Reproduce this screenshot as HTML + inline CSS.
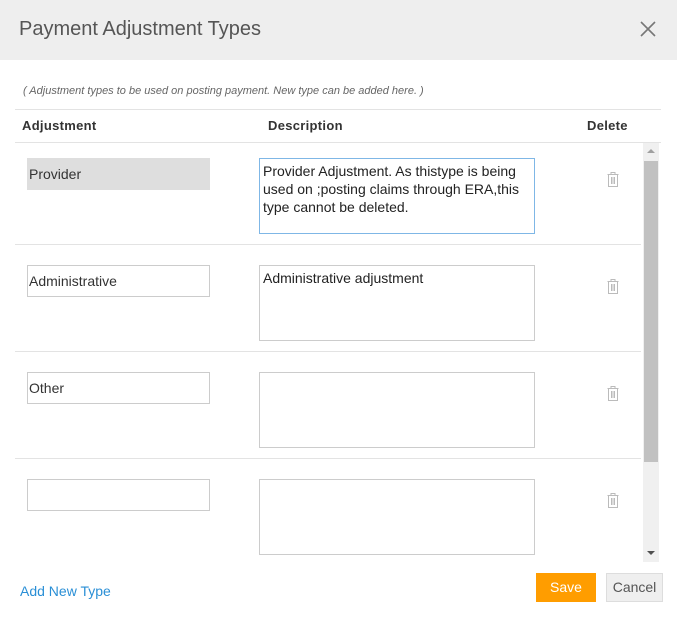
<!DOCTYPE html><html><head><style>
body{margin:0;width:677px;height:639px;background:#fff;font-family:"Liberation Sans",sans-serif;position:relative;overflow:hidden}
.a{position:absolute}
.hd{left:0;top:0;width:677px;height:60px;background:#eeeeee}
.inp{position:absolute;left:27px;width:180px;height:30px;border:1px solid #ccc;background:#fff;font-size:14px;color:#333;line-height:30px;padding-left:1px;box-sizing:content-box}
.ta{position:absolute;left:259px;width:276px;height:76px;border:1px solid #ccc;background:#fff;font-size:14px;color:#222;line-height:18px;padding:3px;box-sizing:border-box}
.ln{position:absolute;left:15px;width:626px;height:1px;background:#e3e3e3}
.tr{position:absolute;left:607px}
</style></head><body>
<div class="a hd"></div>
<div class="a" style="left:19px;top:18px;font-size:20px;color:#555">Payment Adjustment Types</div>
<svg class="a" style="left:640px;top:21px" width="16" height="16"><path d="M1 1L15 15M15 1L1 15" stroke="#777" stroke-width="1.6"/></svg>
<div class="a" style="left:23px;top:85px;font-size:11px;font-style:italic;color:#666">( Adjustment types to be used on posting payment. New type can be added here. )</div>
<div class="a" style="left:15px;top:109px;width:646px;height:1px;background:#e3e3e3"></div>
<div class="a" style="left:22px;top:118px;font-size:13px;font-weight:bold;color:#333;letter-spacing:0.3px">Adjustment</div>
<div class="a" style="left:268px;top:118px;font-size:13px;font-weight:bold;color:#333;letter-spacing:0.3px">Description</div>
<div class="a" style="left:587px;top:118px;font-size:13px;font-weight:bold;color:#333;letter-spacing:0.3px">Delete</div>
<div class="a" style="left:15px;top:142px;width:646px;height:1px;background:#e3e3e3"></div>
<div class="a" style="left:643px;top:143px;width:16px;height:419px;background:#f0f0f0"></div>
<div class="a" style="left:644px;top:161px;width:14px;height:301px;background:#c1c1c1"></div>
<svg class="a" style="left:646px;top:147px" width="10" height="8"><path d="M1 6L5 2L9 6Z" fill="#a0a0a0"/></svg>
<svg class="a" style="left:646px;top:549px" width="10" height="8"><path d="M1 2L5 6L9 2Z" fill="#505050"/></svg>

<div class="inp" style="top:158px;background:#dedede;border-color:#dedede">Provider</div>
<div class="ta" style="top:158px;border-color:#7fb7e6">Provider Adjustment. As thistype is being used on ;posting claims through ERA,this type cannot be deleted.</div>
<div class="ln" style="top:244px"></div>
<div class="inp" style="top:265px">Administrative</div>
<div class="ta" style="top:265px">Administrative adjustment</div>
<div class="ln" style="top:351px"></div>
<div class="inp" style="top:372px">Other</div>
<div class="ta" style="top:372px"></div>
<div class="ln" style="top:458px"></div>
<div class="inp" style="top:479px"></div>
<div class="ta" style="top:479px"></div>

<svg class="tr" style="top:172px" width="12" height="15"><g fill="none" stroke="#bbb" stroke-width="1"><path d="M0.5 2.5H11.5M4 2.5V0.5H8V2.5M1.5 2.5V14.5H10.5V2.5M4.5 5V12M6 5V12M7.5 5V12"/></g></svg>
<svg class="tr" style="top:279px" width="12" height="15"><g fill="none" stroke="#bbb" stroke-width="1"><path d="M0.5 2.5H11.5M4 2.5V0.5H8V2.5M1.5 2.5V14.5H10.5V2.5M4.5 5V12M6 5V12M7.5 5V12"/></g></svg>
<svg class="tr" style="top:386px" width="12" height="15"><g fill="none" stroke="#bbb" stroke-width="1"><path d="M0.5 2.5H11.5M4 2.5V0.5H8V2.5M1.5 2.5V14.5H10.5V2.5M4.5 5V12M6 5V12M7.5 5V12"/></g></svg>
<svg class="tr" style="top:493px" width="12" height="15"><g fill="none" stroke="#bbb" stroke-width="1"><path d="M0.5 2.5H11.5M4 2.5V0.5H8V2.5M1.5 2.5V14.5H10.5V2.5M4.5 5V12M6 5V12M7.5 5V12"/></g></svg>

<div class="a" style="left:20px;top:583px;font-size:14px;color:#2a8fd6">Add New Type</div>
<div class="a" style="left:536px;top:573px;width:60px;height:29px;background:#ff9d00;color:#fff;font-size:14px;text-align:center;line-height:29px">Save</div>
<div class="a" style="left:606px;top:573px;width:55px;height:27px;background:#efefef;border:1px solid #ddd;color:#555;font-size:14px;text-align:center;line-height:27px">Cancel</div>
</body></html>
